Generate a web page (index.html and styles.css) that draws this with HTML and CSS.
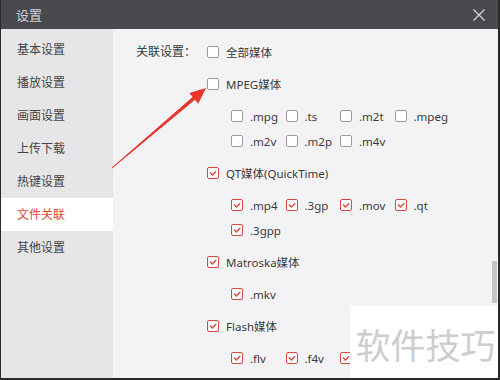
FILE: index.html
```html
<!DOCTYPE html>
<html lang="zh">
<head>
<meta charset="utf-8">
<title>设置</title>
<link rel="stylesheet" href="styles.css">
</head>
<body>
<div class="window">
  <div class="titlebar">
    <span class="title">设置</span>
    <svg class="close" width="12" height="12" viewBox="0 0 12 12"><path d="M0.5 0.5 L11.5 11.5 M11.5 0.5 L0.5 11.5" stroke="#d6d6d8" stroke-width="1.3" fill="none"/></svg>
  </div>
  <div class="body">
    <nav class="sidebar">
      <div class="nav-item">基本设置</div>
      <div class="nav-item">播放设置</div>
      <div class="nav-item">画面设置</div>
      <div class="nav-item">上传下载</div>
      <div class="nav-item">热键设置</div>
      <div class="nav-item active">文件关联</div>
      <div class="nav-item">其他设置</div>
    </nav>
    <main class="content">
      <div class="assoc">
        <div class="assoc-label">关联设置：</div>
        <div class="groups">
          <div class="row"><span class="cb"></span><span class="lbl">全部媒体</span></div>

          <div class="group">
            <div class="row"><span class="cb"></span><span class="lbl">MPEG媒体</span></div>
            <div class="subs">
              <div class="row"><span class="cb"></span><span class="lbl">.mpg</span></div>
              <div class="row"><span class="cb"></span><span class="lbl">.ts</span></div>
              <div class="row"><span class="cb"></span><span class="lbl">.m2t</span></div>
              <div class="row"><span class="cb"></span><span class="lbl">.mpeg</span></div>
              <div class="row"><span class="cb"></span><span class="lbl">.m2v</span></div>
              <div class="row"><span class="cb"></span><span class="lbl">.m2p</span></div>
              <div class="row"><span class="cb"></span><span class="lbl">.m4v</span></div>
            </div>
          </div>

          <div class="group">
            <div class="row"><span class="cb on"></span><span class="lbl">QT媒体(QuickTime)</span></div>
            <div class="subs">
              <div class="row"><span class="cb on"></span><span class="lbl">.mp4</span></div>
              <div class="row"><span class="cb on"></span><span class="lbl">.3gp</span></div>
              <div class="row"><span class="cb on"></span><span class="lbl">.mov</span></div>
              <div class="row"><span class="cb on"></span><span class="lbl">.qt</span></div>
              <div class="row"><span class="cb on"></span><span class="lbl">.3gpp</span></div>
            </div>
          </div>

          <div class="group">
            <div class="row"><span class="cb on"></span><span class="lbl">Matroska媒体</span></div>
            <div class="subs">
              <div class="row"><span class="cb on"></span><span class="lbl">.mkv</span></div>
            </div>
          </div>

          <div class="group">
            <div class="row"><span class="cb on"></span><span class="lbl">Flash媒体</span></div>
            <div class="subs">
              <div class="row"><span class="cb on"></span><span class="lbl">.flv</span></div>
              <div class="row"><span class="cb on"></span><span class="lbl">.f4v</span></div>
              <div class="row"><span class="cb on"></span></div>
            </div>
          </div>
        </div>
      </div>
      <div class="thumb"></div>
    </main>
  </div>
  <svg class="arrow" width="500" height="380" viewBox="0 0 500 380">
    <polygon points="111.6,167.7 192.6,97.0 189.3,93.1 206,88 198.3,103.7 195.0,99.8 112.4,168.3" fill="#e8352e"/>
  </svg>
  <div class="watermark">软件技巧</div>
</div>
</body>
</html>
```

FILE: styles.css
```css
* { box-sizing: border-box; }
html, body { margin: 0; padding: 0; }
body {
  width: 500px;
  height: 380px;
  overflow: hidden;
  font-family: "Noto Sans", "Noto Sans CJK SC", sans-serif;
  font-size: 11.5px;
  color: #3a3a3a;
}
.window {
  position: relative;
  width: 500px;
  height: 380px;
  display: flex;
  flex-direction: column;
  border-left: 1px solid #2a2a2c;
  border-right: 2px solid #2a2a2c;
  border-bottom: 2px solid #2a2a2c;
  overflow: hidden;
}
.titlebar {
  height: 29px;
  flex: none;
  background: #4a4a4e;
  display: flex;
  align-items: center;
  justify-content: space-between;
  padding: 0 13px 0 15px;
}
.title {
  color: #d2d2d4;
  font-size: 13px;
}
.close { display: block; }
.body {
  flex: 1;
  display: flex;
  min-height: 0;
}
.sidebar {
  width: 112px;
  flex: none;
  background: #e6e6e8;
  padding-top: 4px;
}
.nav-item {
  height: 33px;
  line-height: 33px;
  padding-left: 16px;
  color: #444;
  font-size: 12px;
}
.nav-item.active {
  background: #fff;
  color: #e0453b;
}
.content {
  position: relative;
  flex: 1;
  background: #f3f3f5;
  padding: 11px 0 0 23px;
  overflow: hidden;
}
.assoc {
  display: flex;
}
.assoc-label {
  width: 71px;
  flex: none;
  height: 24px;
  line-height: 24px;
  font-size: 12px;
}
.groups {
  display: flex;
  flex-direction: column;
  gap: 8px;
}
.group {
  display: flex;
  flex-direction: column;
  gap: 8px;
}
.row {
  display: flex;
  align-items: center;
  height: 24px;
  white-space: nowrap;
}
.cb {
  width: 12px;
  height: 12px;
  flex: none;
  border: 1px solid #9b9b9d;
  border-radius: 2px;
  background: #fff;
  margin-right: 7px;
}
.cb.on {
  border-color: #d9473f;
  background: #fff url("data:image/svg+xml,%3Csvg xmlns='http://www.w3.org/2000/svg' width='10' height='10' viewBox='0 0 10 10'%3E%3Cpath d='M2 4.6 L4.4 7 L8.2 3.2' stroke='%23d9473f' stroke-width='1.4' fill='none'/%3E%3C/svg%3E") center / 10px 10px no-repeat;
}
.subs {
  margin-left: 24px;
  display: grid;
  grid-template-columns: repeat(4, 54.5px);
  row-gap: 1px;
}
.thumb {
  position: absolute;
  right: 1px;
  top: 232px;
  width: 5px;
  height: 42px;
  background: #c6c6c8;
}
.arrow {
  position: absolute;
  left: -1px;
  top: 0;
  pointer-events: none;
}
.watermark {
  position: absolute;
  left: 349px;
  top: 306px;
  width: 151px;
  height: 74px;
  background: #fff;
  color: #cdcdcd;
  font-family: "Noto Sans CJK SC", sans-serif;
  font-size: 35px;
  display: flex;
  align-items: center;
  justify-content: center;
}
```
